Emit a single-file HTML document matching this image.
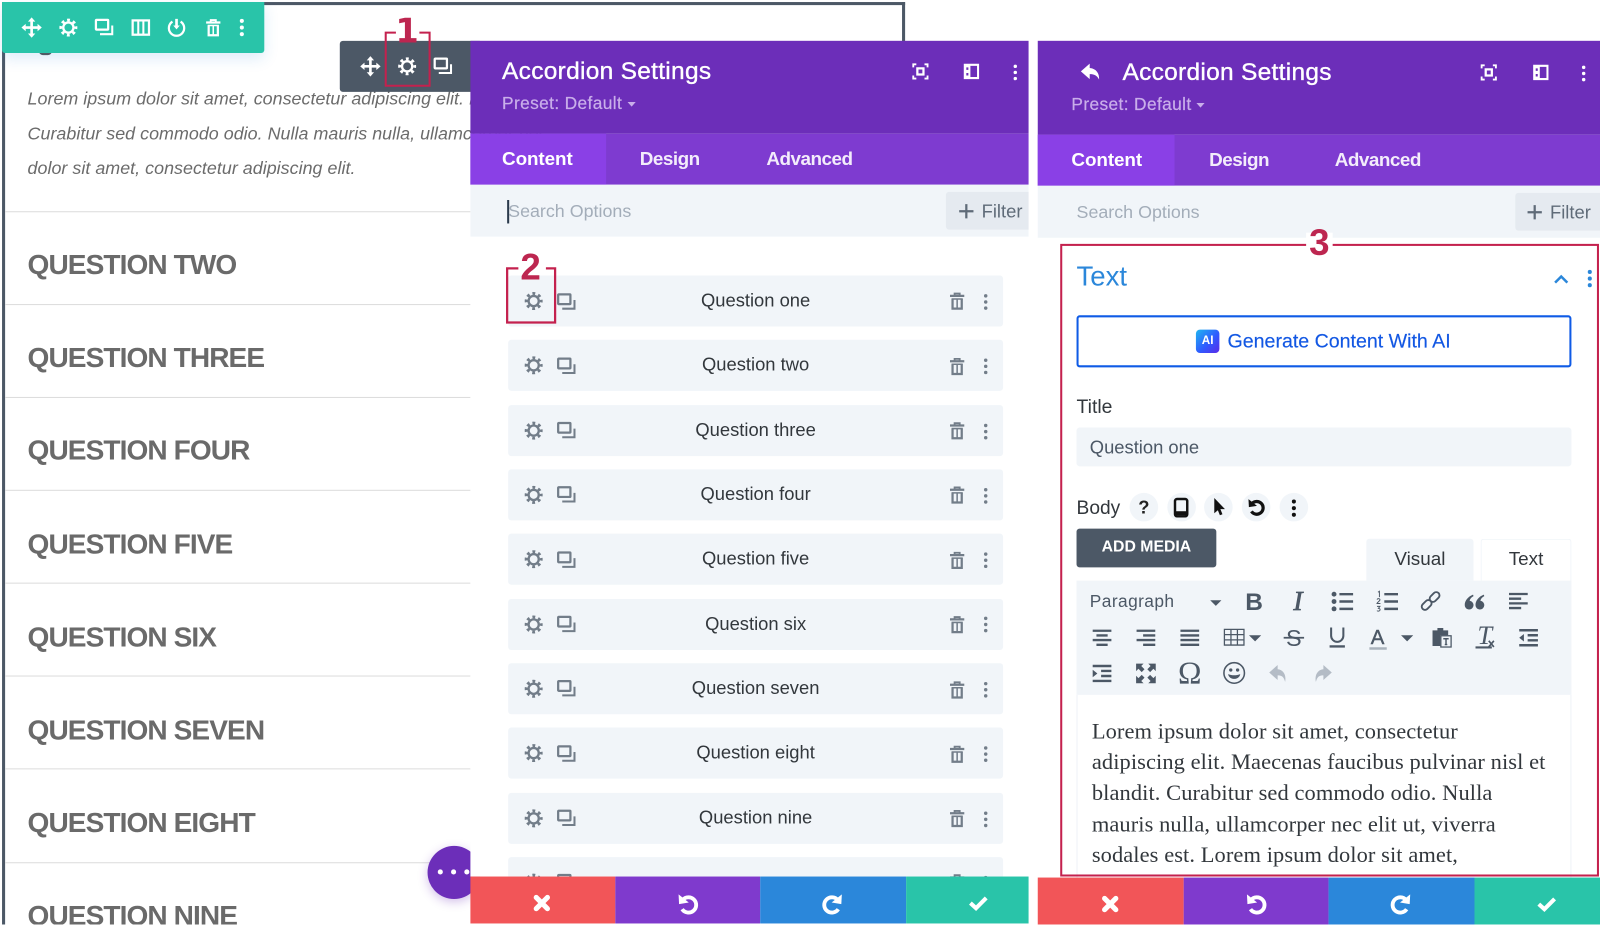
<!DOCTYPE html>
<html lang="en"><head><meta charset="utf-8"><title>Accordion Settings</title>
<style>
html,body{margin:0;padding:0;background:#fff;width:1600px;height:924px;overflow:hidden}
#w{position:absolute;left:0;top:0;width:1568px;height:906px;overflow:hidden;transform:scale(1.020408);transform-origin:0 0;font-family:"Liberation Sans",sans-serif;background:#fff}
.b{position:absolute}
.t{position:absolute;white-space:nowrap;transform:translateY(-50%);line-height:1.2}
.h{font-size:24px;color:#fff;letter-spacing:.28px;-webkit-text-stroke:.35px #fff}
.p{font-size:17px;color:#c9aeea;letter-spacing:.35px;-webkit-text-stroke:.2px #c9aeea}
.tb{font-size:18.5px;font-weight:700;color:#f3ecfb;letter-spacing:-.5px}
.q{position:absolute;left:27px;font-weight:700;font-size:27.5px;letter-spacing:-.9px;color:#6a6a6a;white-space:nowrap;transform:translateY(-50%);line-height:1.2}
.d{position:absolute;left:5px;width:456px;height:1px;background:#dcdcdc}
.l{position:absolute;left:27px;font-style:italic;font-size:17.5px;color:#6b6b6b;white-space:nowrap;transform:translateY(-50%);letter-spacing:.03px;line-height:1.2}
.r{position:absolute;left:498px;width:485px;height:50px;background:#f1f5f9;border-radius:3px}
.rt{position:absolute;left:498px;width:485px;text-align:center;font-size:18px;color:#32373c;transform:translateY(-50%);line-height:1.2}
.n{position:absolute;font-weight:700;color:#bd2650;font-size:36px;line-height:1;transform:translate(-50%,-50%)}
.e{position:absolute;left:1070px;font-family:"Liberation Serif",serif;font-size:22px;color:#32373c;white-space:nowrap;transform:translateY(-50%);letter-spacing:.08px;line-height:1.2}
svg{position:absolute;left:0;top:0}
</style></head><body><div id="w">

<!-- left page -->
<div class="b" style="left:2px;top:2px;width:885px;height:3px;background:#4c5866"></div>
<div class="b" style="left:884px;top:2px;width:3px;height:40px;background:#4c5866"></div>
<div class="b" style="left:2px;top:2px;width:3px;height:904px;background:#4c5866"></div>
<div class="b" style="left:38px;top:50px;width:13px;height:4px;background:#555;border-radius:0 0 6px 6px"></div>
<div class="l" style="top:97px">Lorem ipsum dolor sit amet, consectetur adipiscing elit. Maecenas</div>
<div class="l" style="top:131px">Curabitur sed commodo odio. Nulla mauris nulla, ullamcorper nec</div>
<div class="l" style="top:165px">dolor sit amet, consectetur adipiscing elit.</div>
<div class="d" style="top:207px"></div>
<div class="d" style="top:298px"></div>
<div class="d" style="top:389px"></div>
<div class="d" style="top:480px"></div>
<div class="d" style="top:571px"></div>
<div class="d" style="top:662px"></div>
<div class="d" style="top:753px"></div>
<div class="d" style="top:845px"></div>
<div class="q" style="top:259px">QUESTION TWO</div>
<div class="q" style="top:350px">QUESTION THREE</div>
<div class="q" style="top:441px">QUESTION FOUR</div>
<div class="q" style="top:533px">QUESTION FIVE</div>
<div class="q" style="top:624px">QUESTION SIX</div>
<div class="q" style="top:715px">QUESTION SEVEN</div>
<div class="q" style="top:806px">QUESTION EIGHT</div>
<div class="q" style="top:897px">QUESTION NINE</div>
<div class="b" style="left:2px;top:2px;width:257px;height:50px;background:#29c4a9;border-radius:0 0 3px 3px;box-shadow:0 5px 14px rgba(43,135,218,.16)"></div>
<div class="b" style="left:333px;top:40px;width:140px;height:50px;background:#4c5866;border-radius:3px"></div>
<div class="b" style="left:419px;top:829px;width:52px;height:52px;border-radius:50%;background:#6c2eb9;box-shadow:0 3px 10px rgba(108,46,185,.3)"></div>
<div class="b" style="left:429px;top:852px;width:5px;height:5px;border-radius:50%;background:#fff"></div>
<div class="b" style="left:442px;top:852px;width:5px;height:5px;border-radius:50%;background:#fff"></div>
<div class="b" style="left:455px;top:852px;width:5px;height:5px;border-radius:50%;background:#fff"></div>

<!-- panel 1 -->
<div class="b" style="left:461px;top:40px;width:547px;height:91px;background:#6c2eb9"></div>
<div class="b" style="left:461px;top:131px;width:547px;height:50px;background:#7e3bd0"></div>
<div class="b" style="left:461px;top:131px;width:133px;height:50px;background:#8a40e6"></div>
<div class="b" style="left:461px;top:181px;width:547px;height:51px;background:#f1f5f9"></div>
<div class="b" style="left:461px;top:232px;width:547px;height:627px;background:#fff"></div>
<div class="b" style="left:927px;top:188px;width:81px;height:37px;background:#e5eaf0;border-radius:3px 0 0 3px"></div>
<div class="t h" style="left:492px;top:71px">Accordion Settings</div>
<div class="t p" style="left:492px;top:102px">Preset: Default</div>
<div class="t tb" style="left:492px;top:156px;color:#fff;letter-spacing:-.1px">Content</div>
<div class="t tb" style="left:627px;top:156px">Design</div>
<div class="t tb" style="left:751px;top:156px">Advanced</div>
<div class="b" style="left:497px;top:196px;width:1.5px;height:23px;background:#2b3a4c"></div>
<div class="t" style="left:498px;top:207px;font-size:17.5px;color:#a3adb9">Search Options</div>
<div class="t" style="left:962px;top:208px;font-size:18px;color:#5f6b78">Filter</div>

<div class="r" style="top:270px"></div>
<div class="r" style="top:333px"></div>
<div class="r" style="top:397px"></div>
<div class="r" style="top:460px"></div>
<div class="r" style="top:523px"></div>
<div class="r" style="top:587px"></div>
<div class="r" style="top:650px"></div>
<div class="r" style="top:713px"></div>
<div class="r" style="top:777px"></div>
<div class="r" style="top:840px"></div>
<div class="rt" style="top:295px">Question one</div>
<div class="rt" style="top:358px">Question two</div>
<div class="rt" style="top:422px">Question three</div>
<div class="rt" style="top:485px">Question four</div>
<div class="rt" style="top:548px">Question five</div>
<div class="rt" style="top:612px">Question six</div>
<div class="rt" style="top:675px">Question seven</div>
<div class="rt" style="top:738px">Question eight</div>
<div class="rt" style="top:802px">Question nine</div>

<!-- panel 2 -->
<div class="b" style="left:1017px;top:40px;width:551px;height:92px;background:#6c2eb9"></div>
<div class="b" style="left:1017px;top:132px;width:551px;height:50px;background:#7e3bd0"></div>
<div class="b" style="left:1017px;top:132px;width:134px;height:50px;background:#8a40e6"></div>
<div class="b" style="left:1017px;top:182px;width:551px;height:51px;background:#f1f5f9"></div>
<div class="b" style="left:1485px;top:189px;width:83px;height:37px;background:#e5eaf0;border-radius:3px 0 0 3px"></div>
<div class="t h" style="left:1100px;top:72px">Accordion Settings</div>
<div class="t p" style="left:1050px;top:103px">Preset: Default</div>
<div class="t tb" style="left:1050px;top:157px;color:#fff;letter-spacing:-.1px">Content</div>
<div class="t tb" style="left:1185px;top:157px">Design</div>
<div class="t tb" style="left:1308px;top:157px">Advanced</div>
<div class="t" style="left:1055px;top:208px;font-size:17.5px;color:#a3adb9">Search Options</div>
<div class="t" style="left:1519px;top:209px;font-size:18px;color:#5f6b78">Filter</div>

<div class="t" style="left:1055px;top:271px;font-size:27px;color:#2b87da">Text</div>
<div class="b" style="left:1055px;top:309px;width:481px;height:47px;border:2px solid #0f5be6;border-radius:3px"></div>
<div class="b" style="left:1172px;top:323px;width:23px;height:23px;border-radius:4px;background:linear-gradient(135deg,#1fb6f0,#2f5bff 55%,#5a2be8)"></div>
<div class="t" style="left:1172px;top:335px;width:23px;text-align:center;font-size:11.5px;font-weight:700;color:#fff">AI</div>
<div class="t" style="left:1203px;top:335px;font-size:19.2px;color:#1257e3;-webkit-text-stroke:.15px #1257e3">Generate Content With AI</div>
<div class="t" style="left:1055px;top:400px;font-size:19px;color:#32373c">Title</div>
<div class="b" style="left:1055px;top:419px;width:485px;height:38px;background:#f1f5f9;border-radius:3px"></div>
<div class="t" style="left:1068px;top:439px;font-size:18px;color:#4c5866">Question one</div>
<div class="t" style="left:1055px;top:498px;font-size:18.8px;color:#32373c">Body</div>
<div class="b" style="left:1107px;top:483px;width:28px;height:28px;border-radius:50%;background:#f1f5f9"></div>
<div class="b" style="left:1144px;top:483px;width:28px;height:28px;border-radius:50%;background:#f1f5f9"></div>
<div class="b" style="left:1180px;top:483px;width:28px;height:28px;border-radius:50%;background:#f1f5f9"></div>
<div class="b" style="left:1217px;top:483px;width:28px;height:28px;border-radius:50%;background:#f1f5f9"></div>
<div class="b" style="left:1254px;top:483px;width:28px;height:28px;border-radius:50%;background:#f1f5f9"></div>
<div class="t" style="left:1107px;top:498px;width:28px;text-align:center;font-size:18px;font-weight:700;color:#222">?</div>
<div class="b" style="left:1055px;top:518px;width:137px;height:38px;background:#4c5866;border-radius:3px"></div>
<div class="t" style="left:1055px;top:537px;width:137px;text-align:center;font-size:15.5px;font-weight:700;color:#fff">ADD MEDIA</div>
<div class="b" style="left:1339px;top:528px;width:105px;height:41px;background:#f1f5f9;border-radius:3px 3px 0 0"></div>
<div class="b" style="left:1451px;top:528px;width:87px;height:41px;background:#fff;border:1px solid #f1f5f9;border-bottom:0;border-radius:3px 3px 0 0"></div>
<div class="t" style="left:1339px;top:548px;width:105px;text-align:center;font-size:18.5px;color:#32373c">Visual</div>
<div class="t" style="left:1451px;top:548px;width:89px;text-align:center;font-size:18.5px;color:#32373c">Text</div>
<div class="b" style="left:1055px;top:569px;width:485px;height:112px;background:#f1f5f9"></div>
<div class="b" style="left:1055px;top:681px;width:483px;height:180px;background:#fff;border-left:1px solid #eef2f7;border-right:1px solid #eef2f7"></div>
<div class="t" style="left:1068px;top:590px;font-size:17px;color:#4c5866;letter-spacing:.4px">Paragraph</div>
<div class="e" style="top:717px">Lorem ipsum dolor sit amet, consectetur</div>
<div class="e" style="top:747px">adipiscing elit. Maecenas faucibus pulvinar nisl et</div>
<div class="e" style="top:777px">blandit. Curabitur sed commodo odio. Nulla</div>
<div class="e" style="top:808px">mauris nulla, ullamcorper nec elit ut, viverra</div>
<div class="e" style="top:838px">sodales est. Lorem ipsum dolor sit amet,</div>

<!-- red annotation -->
<div class="b" style="left:1039px;top:239px;width:524px;height:616px;border:2.5px solid #c4214e"></div>
<div class="b" style="left:1280px;top:228px;width:26px;height:20px;background:#fff"></div>
<div class="n" style="left:1293px;top:238px">3</div>

<svg width="1568" height="906" viewBox="0 0 1568 906">
<defs>
<symbol id="gear" viewBox="0 0 20 20"><circle cx="10" cy="10" r="5" fill="none" stroke="currentColor" stroke-width="2.300"/><circle cx="10" cy="10" r="7.400" fill="none" stroke="currentColor" stroke-width="2.800" stroke-dasharray="2.800 3" stroke-dashoffset="1.400"/></symbol>
<symbol id="move" viewBox="0 0 20 20"><path d="M10 2v16M2 10h16" stroke="currentColor" stroke-width="2.600" fill="none"/><path d="M10 0l3.600 4.200H6.400zM10 20l3.600-4.200H6.400zM0 10l4.200-3.600v7.200zM20 10l-4.200-3.600v7.200z" fill="currentColor"/></symbol>
<symbol id="copy" viewBox="0 0 20 20"><rect x="2" y="2.500" width="12" height="9.500" rx=".6" fill="none" stroke="currentColor" stroke-width="2.200"/><path d="M18 8v8.500H6" fill="none" stroke="currentColor" stroke-width="2"/></symbol>
<symbol id="cols" viewBox="0 0 20 20"><rect x="2" y="3" width="16" height="14" fill="none" stroke="currentColor" stroke-width="2.200"/><path d="M7.500 3v14M12.500 3v14" stroke="currentColor" stroke-width="2"/></symbol>
<symbol id="power" viewBox="0 0 20 20"><path d="M6 4.200a7.500 7.500 0 1 0 8 0" fill="none" stroke="currentColor" stroke-width="2.200"/><path d="M10 1.500v8" stroke="currentColor" stroke-width="2.600"/><path d="M6.800 8l3.200 3.800L13.200 8z" fill="currentColor"/></symbol>
<symbol id="trash" viewBox="0 0 20 20"><path d="M3 5h14" stroke="currentColor" stroke-width="2.200"/><path d="M7.500 5V2.700h5V5" fill="none" stroke="currentColor" stroke-width="1.800"/><path d="M5.500 8v9.500h9V8" fill="none" stroke="currentColor" stroke-width="2.200"/><path d="M4.500 8h11M10 8v9.500" stroke="currentColor" stroke-width="1.500"/></symbol>
<symbol id="dots" viewBox="0 0 20 20"><circle cx="10" cy="3.500" r="2" fill="currentColor"/><circle cx="10" cy="10" r="2" fill="currentColor"/><circle cx="10" cy="16.500" r="2" fill="currentColor"/></symbol>
<symbol id="sdots" viewBox="0 0 20 20"><circle cx="10" cy="4" r="1.700" fill="currentColor"/><circle cx="10" cy="10" r="1.700" fill="currentColor"/><circle cx="10" cy="16" r="1.700" fill="currentColor"/></symbol>
<symbol id="focus" viewBox="0 0 20 20"><path d="M6 3H3v3M14 3h3v3M6 17H3v-3M14 17h3v-3" fill="none" stroke="currentColor" stroke-width="1.800"/><rect x="7" y="7" width="6" height="6" fill="none" stroke="currentColor" stroke-width="2.200"/></symbol>
<symbol id="split" viewBox="0 0 20 20"><path fill-rule="evenodd" d="M2.500 2.500h15v15h-15zM9 4.500v11h6.500v-11zM5 6v2.500h2V6zM5 11.500V14h2v-2.500z" fill="currentColor"/></symbol>
<symbol id="back" viewBox="0 0 24 24"><path d="M11 4L3 11l8 7v-4.500c4 0 6.500 1 8.500 5 .3-5.500-2.500-10-8.500-10.500z" fill="currentColor"/></symbol>
<symbol id="ll" viewBox="0 0 24 24"><path d="M2 4.500h20M2 9.500h13M2 14.500h20M2 19.500h13" stroke="currentColor" stroke-width="2.500"/></symbol>
<symbol id="lc" viewBox="0 0 24 24"><path d="M2 4.500h20M6 9.500h12M2 14.500h20M6 19.500h12" stroke="currentColor" stroke-width="2.500"/></symbol>
<symbol id="lr" viewBox="0 0 24 24"><path d="M2 4.500h20M9 9.500h13M2 14.500h20M9 19.500h13" stroke="currentColor" stroke-width="2.500"/></symbol>
<symbol id="lj" viewBox="0 0 24 24"><path d="M2 4.500h20M2 9.500h20M2 14.500h20M2 19.500h20" stroke="currentColor" stroke-width="2.500"/></symbol>
<symbol id="ul" viewBox="0 0 24 24"><circle cx="3.500" cy="4.500" r="2.500" fill="currentColor"/><circle cx="3.500" cy="12" r="2.500" fill="currentColor"/><circle cx="3.500" cy="19.500" r="2.500" fill="currentColor"/><path d="M9 4.500h14M9 12h14M9 19.500h14" stroke="currentColor" stroke-width="2.500"/></symbol>
<symbol id="ol" viewBox="0 0 24 24"><path d="M9 4.500h14M9 12h14M9 19.500h14" stroke="currentColor" stroke-width="2.500"/><path d="M2.500 2.500l1.500-1v6M1.500 10c1-1.500 3.500-1 3 .5-.3 1-2.500 2-3 3.500h3.500M1.500 17h3l-1.500 2c1.500 0 2 1 1.500 2s-2.500 1-3 .3" fill="none" stroke="currentColor" stroke-width="1"/></symbol>
<symbol id="link" viewBox="0 0 24 24"><g fill="none" stroke="currentColor" stroke-width="2" transform="rotate(-45 12 12)"><rect x="0" y="8.500" width="12" height="7" rx="3.500"/><rect x="12" y="8.500" width="12" height="7" rx="3.500"/></g></symbol>
<symbol id="quote" viewBox="0 0 24 24"><path d="M10 5C5 7 1.500 11 1.500 15.500a4.500 4.500 0 1 0 5-4.300C7 9 8.500 7.500 10.500 6.500zM21 5c-5 2-8.500 6-8.500 10.500a4.500 4.500 0 1 0 5-4.300C18 9 19.500 7.500 21.500 6.500z" fill="currentColor"/></symbol>
<symbol id="table" viewBox="0 0 24 24"><path d="M2 4h20v16H2zM2 9.300h20M2 14.700h20M8.700 4v16M15.300 4v16" fill="none" stroke="currentColor" stroke-width="1.300"/></symbol>
<symbol id="tri" viewBox="0 0 10 10"><path d="M0 3h10L5 8z" fill="currentColor"/></symbol>
<symbol id="indent" viewBox="0 0 24 24"><path d="M2 4h20M11 9.300h11M11 14.700h11M2 20h20" stroke="currentColor" stroke-width="2.600"/><path d="M2 8v8l5-4z" fill="currentColor"/></symbol>
<symbol id="outdent" viewBox="0 0 24 24"><path d="M2 4h20M11 9.300h11M11 14.700h11M2 20h20" stroke="currentColor" stroke-width="2.600"/><path d="M7 8v8l-5-4z" fill="currentColor"/></symbol>
<symbol id="full" viewBox="0 0 24 24"><path d="M1.500 1.500h8L7 4l3.500 3.500L7.500 10.500 4 7 1.500 9.500zM22.500 1.500h-8L17 4l-3.500 3.500 3 3L20 7l2.500 2.500zM1.500 22.500h8L7 20l3.500-3.500-3-3L4 17l-2.500-2.500zM22.500 22.500h-8L17 20l-3.500-3.500 3-3L20 17l2.500-2.500z" fill="currentColor"/></symbol>
<symbol id="smile" viewBox="0 0 24 24"><circle cx="12" cy="12" r="10.500" fill="none" stroke="currentColor" stroke-width="1.600"/><circle cx="8.500" cy="9" r="1.700" fill="currentColor"/><circle cx="15.500" cy="9" r="1.700" fill="currentColor"/><path d="M5.800 13.200c1 6.500 11.400 6.500 12.400 0-4 1.600-8.400 1.600-12.400 0z" fill="currentColor"/></symbol>
<symbol id="paste" viewBox="0 0 24 24"><path d="M3 5h5V2.500h6V5h5v5H11v11H3z" fill="currentColor"/><rect x="11.500" y="10.500" width="10.500" height="11.500" fill="#f1f5f9" stroke="currentColor" stroke-width="1.300"/><path d="M14 13.500h5.500M16.800 13.500v6M15.500 19.500h2.600" stroke="currentColor" stroke-width="1.500" fill="none"/></symbol>
<symbol id="redo" viewBox="0 0 24 24"><path d="M13 3l9 8-9 8v-5c-4 0-6.500 1-8 7-1.500-7.500 2-13 8-13.500z" fill="currentColor"/></symbol>
<symbol id="undo" viewBox="0 0 24 24"><path d="M11 3l-9 8 9 8v-5c4 0 6.500 1 8 7 1.500-7.500-2-13-8-13.500z" fill="currentColor"/></symbol>
<symbol id="reset" viewBox="0 0 24 24"><path d="M7 8A7.500 7.500 0 1 1 6.500 17" fill="none" stroke="currentColor" stroke-width="3.800"/><path d="M3 2.500l.5 9.500L13 10.500z" fill="currentColor"/></symbol>
<symbol id="again" viewBox="0 0 24 24"><path d="M17 8A7.500 7.500 0 1 0 17.500 17" fill="none" stroke="currentColor" stroke-width="3.800"/><path d="M21 2.500l-.5 9.500L11 10.500z" fill="currentColor"/></symbol>
</defs>

<g color="#fff">
<use href="#move" x="21" y="17" width="20" height="20"/><use href="#gear" x="57" y="17" width="20" height="20"/><use href="#copy" x="92" y="17" width="20" height="20"/><use href="#cols" x="128" y="17" width="20" height="20"/><use href="#power" x="163" y="17" width="20" height="20"/><use href="#trash" x="199" y="17" width="20" height="20"/><use href="#dots" x="227" y="17" width="20" height="20"/>
<use href="#move" x="353" y="55" width="20" height="20"/><use href="#gear" x="389" y="55" width="20" height="20"/><use href="#copy" x="424" y="55" width="20" height="20"/>
<use href="#focus" x="892" y="60" width="20" height="20"/><use href="#split" x="942" y="60" width="20" height="20"/><use href="#sdots" x="985" y="61" width="20" height="20"/>
<use href="#back" x="1056" y="58" width="26" height="26"/>
<use href="#focus" x="1449" y="61" width="20" height="20"/><use href="#split" x="1500" y="61" width="20" height="20"/><use href="#sdots" x="1542" y="62" width="20" height="20"/>
</g>
<g fill="#c9aeea"><path d="M615 100h8l-4 4.500zM1172.500 101h8l-4 4.500z"/></g>
<g stroke="#5f6b78" stroke-width="2.200"><path d="M947 200v14M940 207h14M1504 201v14M1497 208h14"/></g>

<g color="#727d89">
<use href="#gear" x="513" y="285" width="20" height="20"/><use href="#copy" x="545" y="286" width="20" height="20"/><use href="#trash" x="928" y="285" width="20" height="20"/><use href="#sdots" x="956" y="286" width="20" height="20"/>
<use href="#gear" x="513" y="348" width="20" height="20"/><use href="#copy" x="545" y="349" width="20" height="20"/><use href="#trash" x="928" y="349" width="20" height="20"/><use href="#sdots" x="956" y="349" width="20" height="20"/>
<use href="#gear" x="513" y="412" width="20" height="20"/><use href="#copy" x="545" y="412" width="20" height="20"/><use href="#trash" x="928" y="412" width="20" height="20"/><use href="#sdots" x="956" y="413" width="20" height="20"/>
<use href="#gear" x="513" y="475" width="20" height="20"/><use href="#copy" x="545" y="475" width="20" height="20"/><use href="#trash" x="928" y="475" width="20" height="20"/><use href="#sdots" x="956" y="476" width="20" height="20"/>
<use href="#gear" x="513" y="538" width="20" height="20"/><use href="#copy" x="545" y="539" width="20" height="20"/><use href="#trash" x="928" y="539" width="20" height="20"/><use href="#sdots" x="956" y="539" width="20" height="20"/>
<use href="#gear" x="513" y="602" width="20" height="20"/><use href="#copy" x="545" y="602" width="20" height="20"/><use href="#trash" x="928" y="602" width="20" height="20"/><use href="#sdots" x="956" y="602" width="20" height="20"/>
<use href="#gear" x="513" y="665" width="20" height="20"/><use href="#copy" x="545" y="665" width="20" height="20"/><use href="#trash" x="928" y="666" width="20" height="20"/><use href="#sdots" x="956" y="666" width="20" height="20"/>
<use href="#gear" x="513" y="728" width="20" height="20"/><use href="#copy" x="545" y="729" width="20" height="20"/><use href="#trash" x="928" y="729" width="20" height="20"/><use href="#sdots" x="956" y="729" width="20" height="20"/>
<use href="#gear" x="513" y="792" width="20" height="20"/><use href="#copy" x="545" y="792" width="20" height="20"/><use href="#trash" x="928" y="792" width="20" height="20"/><use href="#sdots" x="956" y="793" width="20" height="20"/>
<use href="#gear" x="513" y="855" width="20" height="20"/><use href="#copy" x="545" y="855" width="20" height="20"/><use href="#trash" x="928" y="855" width="20" height="20"/><use href="#sdots" x="956" y="856" width="20" height="20"/>
</g>

<!-- annotation boxes -->
<g fill="none" stroke="#c4214e" stroke-width="2">
<path d="M388 32h-10v52h43V32h-10"/>
<path d="M508 263h-11v53h47V263h-9" stroke-width="2.200"/>
</g>

<!-- section -->
<path d="M1524 277l6-6 6 6" fill="none" stroke="#2b87da" stroke-width="2.500"/>
<use href="#dots" x="1548" y="263" width="20" height="20" color="#2b87da"/>

<!-- body icons -->
<g color="#111">
<rect x="1151.500" y="489" width="12" height="17" rx="2" fill="none" stroke="#111" stroke-width="2.400"/><rect x="1152" y="501" width="11" height="4" fill="#111"/>
<path d="M1190 488v15l3.500-3 2 5 2.500-1-2-5h4.500z" fill="#111"/>
<use href="#reset" x="1221" y="487" width="20" height="20"/>
<use href="#dots" x="1258" y="488" width="20" height="20"/>
</g>

<!-- editor toolbar -->
<g color="#4c5866">
<use href="#tri" x="1186" y="585" width="11" height="11"/>
<use href="#ul" x="1304" y="578" width="23" height="23"/><use href="#ol" x="1348" y="578" width="23" height="23"/><use href="#link" x="1391" y="578" width="22" height="22"/><use href="#quote" x="1434" y="578" width="23" height="23"/><use href="#ll" x="1477" y="578" width="22" height="22"/>
<use href="#lc" x="1069" y="614" width="22" height="22"/><use href="#lr" x="1112" y="614" width="22" height="22"/><use href="#lj" x="1155" y="614" width="22" height="22"/><use href="#table" x="1198" y="613" width="23" height="23"/><use href="#tri" x="1224" y="619" width="12" height="12"/>
<use href="#tri" x="1373" y="619" width="12" height="12"/><use href="#paste" x="1401" y="613" width="23" height="23"/><use href="#outdent" x="1487" y="614" width="22" height="22"/>
<use href="#indent" x="1069" y="649" width="22" height="22"/><use href="#full" x="1112" y="649" width="22" height="22"/><use href="#smile" x="1198" y="648" width="23" height="23"/>
<text x="1229" y="598" font-family="Liberation Sans,sans-serif" font-size="24" font-weight="700" text-anchor="middle" fill="#4c5866">B</text>
<text x="1272" y="598" font-family="Liberation Serif,serif" font-size="27" font-style="italic" text-anchor="middle" fill="#4c5866" stroke="#4c5866" stroke-width=".7">I</text>
<text x="1268" y="633" font-family="Liberation Sans,sans-serif" font-size="23" text-anchor="middle" fill="#4c5866">S</text><path d="M1258 625h20" stroke="#4c5866" stroke-width="1.800"/>
<path d="M1304.500 615v8a6 6 0 0 0 12 0v-8" fill="none" stroke="#4c5866" stroke-width="2"/><path d="M1303 633.500h15" stroke="#4c5866" stroke-width="2.300"/>
<text x="1350" y="631" font-family="Liberation Sans,sans-serif" font-size="20" text-anchor="middle" fill="#4c5866" stroke="#4c5866" stroke-width=".4">A</text><path d="M1342 635.500h17" stroke="#aab3bd" stroke-width="2.400"/>
<text x="1455" y="631" font-family="Liberation Serif,serif" font-size="26" font-style="italic" text-anchor="middle" fill="#4c5866">T</text><path d="M1446 634.500h16" stroke="#4c5866" stroke-width="2"/><path d="M1459 628l5 6M1464 628l-5 6" stroke="#4c5866" stroke-width="1.600"/>
<text x="1166" y="670" font-family="Liberation Serif,serif" font-size="31" text-anchor="middle" fill="#4c5866">Ω</text>
</g>
<use href="#undo" x="1242" y="649" width="22" height="22" color="#b4bcc6"/>
<use href="#redo" x="1285" y="649" width="22" height="22" color="#b4bcc6"/>
</svg>

<div class="n" style="left:399px;top:30px;font-family:'DejaVu Sans',sans-serif;font-size:33px">1</div>
<div class="n" style="left:520px;top:262px">2</div>

<!-- footers -->
<div class="b" style="left:461px;top:859px;width:142px;height:46px;background:#f25558"></div>
<div class="b" style="left:603px;top:859px;width:142px;height:46px;background:#7f3acd"></div>
<div class="b" style="left:745px;top:859px;width:143px;height:46px;background:#2b87da"></div>
<div class="b" style="left:888px;top:859px;width:120px;height:46px;background:#29c4a9"></div>
<div class="b" style="left:1017px;top:860px;width:143px;height:46px;background:#f25558"></div>
<div class="b" style="left:1160px;top:860px;width:142px;height:46px;background:#7f3acd"></div>
<div class="b" style="left:1302px;top:860px;width:143px;height:46px;background:#2b87da"></div>
<div class="b" style="left:1445px;top:860px;width:123px;height:46px;background:#29c4a9"></div>
<svg width="1568" height="906" viewBox="0 0 1568 906" color="#fff">
<path d="M525.500 879.500l5.500 5.500M536.500 879.500l-5.500 5.500M525.500 890.500l5.500-5.500M536.500 890.500l-5.500-5.500" stroke="#fff" stroke-width="5" stroke-linecap="round"/>
<path d="M1082.500 880.500l5.500 5.500M1093.500 880.500l-5.500 5.500M1082.500 891.500l5.500-5.500M1093.500 891.500l-5.500-5.500" stroke="#fff" stroke-width="5" stroke-linecap="round"/>
<use href="#reset" x="662" y="874" width="24" height="24"/><use href="#again" x="804" y="874" width="24" height="24"/>
<use href="#reset" x="1219" y="874" width="24" height="24"/><use href="#again" x="1361" y="874" width="24" height="24"/>
<path d="M951 885l5.500 5 10-10" fill="none" stroke="#fff" stroke-width="4"/>
<path d="M1508 886l5.500 5 10-10" fill="none" stroke="#fff" stroke-width="4"/>
</svg>
</div></body></html>
